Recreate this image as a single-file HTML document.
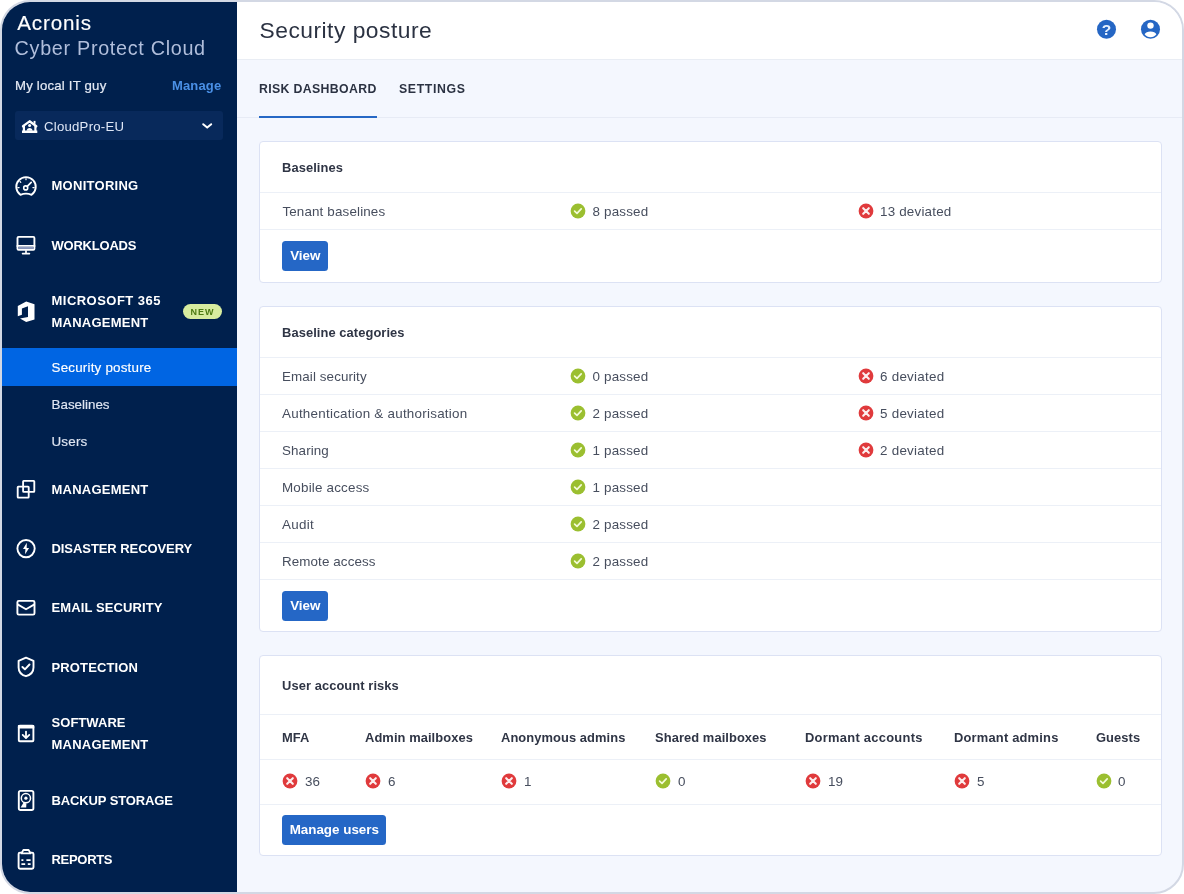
<!DOCTYPE html>
<html lang="en">
<head>
<meta charset="utf-8">
<title>Security posture</title>
<style>
*{box-sizing:border-box;margin:0;padding:0}
html,body{width:1184px;height:894px;background:#fff;overflow:hidden}
body{font-family:"Liberation Sans",Arial,sans-serif;color:#2b3242;font-size:13px;position:relative}
.frame{will-change:transform;position:absolute;left:0;top:0;width:1184px;height:894px;border:2px solid #d3d8e4;border-radius:30px;overflow:hidden;background:#f4f7fe}
.abs{position:absolute;white-space:nowrap}
/* sidebar */
.side{position:absolute;left:0;top:0;width:235px;height:890px;background:#00204d;color:#fff}
.logo1{left:15.2px;top:7.5px;font-size:20.6px;letter-spacing:.85px;color:#fff;line-height:26px;-webkit-text-stroke:.15px #fff}
.logo2{left:12.6px;top:33px;font-size:19.8px;color:#b0bedb;line-height:26px;letter-spacing:.69px}
.tenant{left:13px;top:76px;font-size:13.2px;letter-spacing:.2px;color:#e3e9f4;line-height:16px;-webkit-text-stroke:.2px #e3e9f4}
.manage{left:170px;top:76px;font-size:13px;font-weight:bold;letter-spacing:.15px;color:#4a90e6;line-height:16px}
.dd{position:absolute;left:12.5px;top:108.7px;width:208px;height:29.8px;background:#08295b;border-radius:3px}
.dd span{position:absolute;left:29.5px;top:7.9px;font-size:13.2px;letter-spacing:.23px;color:#dfe7f6;line-height:16px}
.mi{position:absolute;left:49.5px;margin-top:1px;font-size:13px;font-weight:bold;letter-spacing:.2px;color:#fff;line-height:22px;white-space:nowrap}
.sub{position:absolute;left:49.5px;margin-top:.7px;font-size:13.4px;letter-spacing:.2px;color:#dfe6f2;-webkit-text-stroke:.15px currentColor;line-height:16px;white-space:nowrap}
.active{position:absolute;left:0;top:346.4px;width:235px;height:37.2px;background:#0065e3}
.ico{position:absolute;left:14px;width:22px;height:22px}
.new{position:absolute;left:180.7px;top:302.1px;width:39.6px;height:15.2px;border-radius:8px;background:#d7ec9f;color:#4c7a12;font-size:9px;font-weight:bold;letter-spacing:1px;text-align:center;line-height:17.2px}
/* header */
.head{position:absolute;left:235px;top:0;width:945px;height:58px;background:#fff;border-bottom:1px solid #e9edf4}
.title{left:257.5px;top:13.6px;font-size:22.8px;color:#2b3242;line-height:28px;letter-spacing:.5px}
.tab{font-size:12.3px;font-weight:bold;letter-spacing:.35px;color:#2b3242;line-height:16px;top:79px}
.tabline{position:absolute;left:235px;top:115px;width:945px;height:1px;background:#e7ebf5}
.tabul{position:absolute;left:257px;top:113.5px;width:117.5px;height:2.8px;background:#2668c5}
/* cards */
.card{position:absolute;left:257px;width:903px;background:#fff;border:1px solid #dce2f4;border-radius:4px}
.card .h{position:absolute;left:22px;font-size:12.9px;font-weight:bold;letter-spacing:.08px;color:#2f3545;line-height:16px;white-space:nowrap}
.card .t{position:absolute;font-size:13.4px;letter-spacing:.1px;color:#474e5e;line-height:16px;white-space:nowrap}
.card .hr{position:absolute;left:0;width:901px;height:1px;background:#ecf0f7}
.btn{position:absolute;left:22.3px;height:30px;background:#2567c6;border-radius:3.5px;color:#fff;font-size:13.4px;font-weight:bold;line-height:30px;text-align:center}
.ok,.bad{position:absolute;width:16px;height:16px;margin-top:-.8px}
</style>
</head>
<body>
<svg width="0" height="0" style="position:absolute">
  <defs>
    <symbol id="ok" viewBox="0 0 16 16"><circle cx="8" cy="8" r="7.4" fill="#9bbf30"/><path d="M4.6 8.1 L7 10.3 L11.2 5.9" fill="none" stroke="#f4fbd9" stroke-width="1.7" stroke-linecap="round" stroke-linejoin="round"/></symbol>
    <symbol id="bad" viewBox="0 0 16 16"><circle cx="8" cy="8" r="7.4" fill="#e03a3c"/><path d="M5.2 5.2 L10.8 10.8 M10.8 5.2 L5.2 10.8" fill="none" stroke="#fdeeee" stroke-width="2.1" stroke-linecap="round"/></symbol>
  </defs>
</svg>
<div class="frame">
  <div class="side">
    <div class="abs logo1">Acronis</div>
    <div class="abs logo2">Cyber Protect Cloud</div>
    <div class="abs tenant">My local IT guy</div>
    <div class="abs manage">Manage</div>
    <div class="dd"><span>CloudPro-EU</span></div>
    <div class="active"></div>
    <div class="mi" style="top:172px;letter-spacing:0.27px">MONITORING</div>
    <div class="mi" style="top:232px;letter-spacing:-0.22px">WORKLOADS</div>
    <div class="mi" style="top:287.3px;letter-spacing:0.47px">MICROSOFT 365</div>
    <div class="mi" style="top:309.2px;letter-spacing:0.24px">MANAGEMENT</div>
    <div class="new">NEW</div>
    <div class="sub" style="top:357px;color:#fff">Security posture</div>
    <div class="sub" style="top:394px;letter-spacing:0">Baselines</div>
    <div class="sub" style="top:431px">Users</div>
    <div class="mi" style="top:476px;letter-spacing:0.24px">MANAGEMENT</div>
    <div class="mi" style="top:535px;letter-spacing:-0.07px">DISASTER RECOVERY</div>
    <div class="mi" style="top:594px;letter-spacing:0.11px">EMAIL SECURITY</div>
    <div class="mi" style="top:653.5px;letter-spacing:0.13px">PROTECTION</div>
    <div class="mi" style="top:709px;letter-spacing:0.05px">SOFTWARE</div>
    <div class="mi" style="top:731px;letter-spacing:0.24px">MANAGEMENT</div>
    <div class="mi" style="top:787px;letter-spacing:-0.12px">BACKUP STORAGE</div>
    <div class="mi" style="top:846px;letter-spacing:-0.3px">REPORTS</div>
    <!-- sidebar icons drawn in page coordinates -->
    <svg class="abs" style="left:0;top:0" width="235" height="890" viewBox="2 2 235 890" fill="none" stroke="#fff" stroke-width="1.9" stroke-linejoin="round" stroke-linecap="round">
      <!-- tenant house icon -->
      <path d="M23 126.2 L29.6 121.3 L36.3 126.2" stroke-width="2.3"/>
      <path d="M23.9 126 V131 M35.4 126 V131" stroke-width="2.2" stroke-linecap="butt"/>
      <path d="M22 131.8 H37.3" stroke-width="2.4" stroke-linecap="butt"/>
      <g stroke="none" fill="#fff">
        <rect x="33.6" y="120.9" width="1.9" height="3"/>
        <circle cx="29.6" cy="125.4" r="1.5"/>
        <path d="M26.6 130.8 C26.6 126.9 32.6 126.9 32.6 130.8 Z"/>
      </g>
      <!-- dropdown chevron -->
      <path d="M203.2 124.2 L207.2 127.6 L211.2 124.2" stroke-width="2"/>
      <!-- monitoring -->
      <path d="M20.4 194.8 A9.75 9.75 0 1 1 31.6 194.8 Q26 192.4 20.4 194.8 Z" stroke-width="1.85"/>
      <circle cx="25.7" cy="187.9" r="2" stroke-width="1.6"/>
      <path d="M27.2 186.4 L31.2 182.4" stroke-width="1.7"/>
      <path d="M26 178.5 V179.7 M17.8 187.6 H19.1 M32.9 187.6 H34.2 M20 181.5 L20.8 182.3" stroke-width="1.2"/>
      <!-- workloads -->
      <rect x="17.5" y="236.9" width="16.9" height="12.9" rx="1.1"/>
      <path d="M17.4 245.9 H34.5"/>
      <rect x="18.4" y="246.9" width="15.1" height="2" fill="#8f9cc0" stroke="none"/>
      <path d="M26 250.8 V253 M22.6 253.6 H29.4" stroke-width="1.7"/>
      <!-- microsoft 365 -->
      <path stroke="none" fill="#fff" d="M26.2 301.6 L34.5 304.2 L34.5 319.4 L26.2 322.1 L20 318.6 L28 317 L28 306.3 L21.9 308.5 L21.9 314.8 L17.8 316.2 L17.8 306 Z"/>
      <!-- management -->
      <rect x="23.1" y="480.8" width="11.2" height="11" rx=".6" stroke-width="1.85"/>
      <rect x="17.7" y="486.6" width="11" height="11" rx=".6" stroke-width="1.85"/>
      <!-- disaster recovery -->
      <circle cx="26.05" cy="548.6" r="8.65"/>
      <path stroke="none" fill="#fff" d="M26.8 542.8 L23 548.9 L25.4 548.9 L25.1 554.3 L29.1 547.9 L26.7 547.9 Z"/>
      <!-- email security -->
      <rect x="17.4" y="600.9" width="17.1" height="13.7" rx="1.4"/>
      <path d="M18 604.6 L26 609.3 L34 604.6" stroke-width="1.8"/>
      <!-- protection -->
      <path d="M26 657.7 L33.5 660.9 V667.4 C33.5 671.6 30.6 674.8 26 676.2 C21.4 674.8 18.6 671.6 18.6 667.4 V660.9 Z"/>
      <path d="M22.4 667 L24.9 669.3 L29.5 664.5" stroke-width="1.9"/>
      <!-- software management -->
      <rect x="18.8" y="725.8" width="14.6" height="15.5" rx="1"/>
      <rect x="17.9" y="724.9" width="16.4" height="3.7" rx=".9" fill="#fff" stroke="none"/>
      <path d="M26 731.6 V737.4 M22.7 734.9 L26 738.1 L29.3 734.9" stroke-width="1.8"/>
      <!-- backup storage -->
      <rect x="18.8" y="790.9" width="14.6" height="19.1" rx="1.8"/>
      <circle cx="25.9" cy="798.2" r="4.6" stroke-width="1.5"/>
      <circle cx="25.9" cy="798.2" r="1.6" fill="#fff" stroke="none"/>
      <path stroke="none" fill="#fff" d="M23.6 802.6 L26.4 803.4 L26.2 807.6 L20.6 807.6 Z"/>
      <!-- reports -->
      <path d="M21.6 852.6 H20 Q18.6 852.6 18.6 854 V867.3 Q18.6 868.7 20 868.7 H32 Q33.5 868.7 33.5 867.3 V854 Q33.5 852.6 32 852.6 H30.4"/>
      <path d="M21.4 853.4 L23.4 850 H28.6 L30.6 853.4 Z" stroke-width="1.8"/>
      <path d="M21.4 860.2 H23.4 M26.4 860.2 H30.6 M21.4 864.2 H25.2 M27.8 864.2 H30.6" stroke-width="1.7" stroke-linecap="butt"/>
    </svg>
  </div>
  <div class="head"></div>
  <div class="abs title">Security posture</div>
  <svg class="abs" style="left:1094px;top:17px" width="66" height="22" viewBox="1096 19 66 22">
    <circle cx="1106.5" cy="29.3" r="9.5" fill="#2566c4"/>
    <text x="1106.5" y="34.9" text-anchor="middle" font-family="Liberation Sans, Arial, sans-serif" font-weight="bold" font-size="15.5" fill="#eaf3ff">?</text>
    <circle cx="1150.5" cy="29.3" r="9.5" fill="#2566c4"/>
    <circle cx="1150.5" cy="25.6" r="3.2" fill="#fff"/>
    <path d="M1144.6 34.3 C1145.6 30.4 1155.4 30.4 1156.4 34.3 C1155 36.2 1152.9 37.3 1150.5 37.3 C1148.1 37.3 1146 36.2 1144.6 34.3 Z" fill="#fff"/>
  </svg>
  <div class="abs tab" style="left:257px">RISK DASHBOARD</div>
  <div class="abs tab" style="left:397px;letter-spacing:.62px">SETTINGS</div>
  <div class="tabline"></div>
  <div class="tabul"></div>

  <div class="card" style="top:139px;height:142px">
    <div class="h" style="top:18px">Baselines</div>
    <div class="hr" style="top:50.4px"></div>
    <div class="t" style="left:22.4px;top:62px;letter-spacing:.15px">Tenant baselines</div>
    <svg class="ok" style="left:310px;top:62px"><use href="#ok"/></svg><div class="t" style="left:332.4px;top:62px;letter-spacing:.21px">8 passed</div>
    <svg class="bad" style="left:598px;top:62px"><use href="#bad"/></svg><div class="t" style="left:620px;top:62px;letter-spacing:.2px">13 deviated</div>
    <div class="hr" style="top:87.4px"></div>
    <div class="btn" style="top:99px;width:46px">View</div>
  </div>

  <div class="card" style="top:304px;height:326.3px">
    <div class="h" style="top:18px">Baseline categories</div>
    <div class="hr" style="top:50.4px"></div>
    <div class="t" style="left:22px;top:62px">Email security</div>
    <svg class="ok" style="left:310px;top:62px"><use href="#ok"/></svg><div class="t" style="left:332.4px;top:62px;letter-spacing:.21px">0 passed</div>
    <svg class="bad" style="left:598px;top:62px"><use href="#bad"/></svg><div class="t" style="left:620px;top:62px;letter-spacing:.26px">6 deviated</div>
    <div class="hr" style="top:87.4px"></div>
    <div class="t" style="left:22px;top:99px;letter-spacing:.25px">Authentication &amp; authorisation</div>
    <svg class="ok" style="left:310px;top:99px"><use href="#ok"/></svg><div class="t" style="left:332.4px;top:99px;letter-spacing:.21px">2 passed</div>
    <svg class="bad" style="left:598px;top:99px"><use href="#bad"/></svg><div class="t" style="left:620px;top:99px;letter-spacing:.26px">5 deviated</div>
    <div class="hr" style="top:124.4px"></div>
    <div class="t" style="left:22px;top:136px">Sharing</div>
    <svg class="ok" style="left:310px;top:136px"><use href="#ok"/></svg><div class="t" style="left:332.4px;top:136px;letter-spacing:.21px">1 passed</div>
    <svg class="bad" style="left:598px;top:136px"><use href="#bad"/></svg><div class="t" style="left:620px;top:136px;letter-spacing:.26px">2 deviated</div>
    <div class="hr" style="top:161.4px"></div>
    <div class="t" style="left:22px;top:173px;letter-spacing:.2px">Mobile access</div>
    <svg class="ok" style="left:310px;top:173px"><use href="#ok"/></svg><div class="t" style="left:332.4px;top:173px;letter-spacing:.21px">1 passed</div>
    <div class="hr" style="top:198.4px"></div>
    <div class="t" style="left:22px;top:210px;letter-spacing:.3px">Audit</div>
    <svg class="ok" style="left:310px;top:210px"><use href="#ok"/></svg><div class="t" style="left:332.4px;top:210px;letter-spacing:.21px">2 passed</div>
    <div class="hr" style="top:235.4px"></div>
    <div class="t" style="left:22px;top:247px">Remote access</div>
    <svg class="ok" style="left:310px;top:247px"><use href="#ok"/></svg><div class="t" style="left:332.4px;top:247px;letter-spacing:.21px">2 passed</div>
    <div class="hr" style="top:272.4px"></div>
    <div class="btn" style="top:284px;width:46px">View</div>
  </div>

  <div class="card" style="top:653px;height:201.3px">
    <div class="h" style="top:22px">User account risks</div>
    <div class="hr" style="top:58.4px"></div>
    <div class="h" style="left:22px;top:74px">MFA</div>
    <div class="h" style="left:105px;top:74px">Admin mailboxes</div>
    <div class="h" style="left:241px;top:74px">Anonymous admins</div>
    <div class="h" style="left:395px;top:74px">Shared mailboxes</div>
    <div class="h" style="left:545px;top:74px;letter-spacing:.28px">Dormant accounts</div>
    <div class="h" style="left:694px;top:74px;letter-spacing:.2px">Dormant admins</div>
    <div class="h" style="left:836px;top:74px">Guests</div>
    <div class="hr" style="top:103.4px"></div>
    <svg class="bad" style="left:22px;top:118px"><use href="#bad"/></svg><div class="t" style="left:45px;top:118px">36</div>
    <svg class="bad" style="left:105px;top:118px"><use href="#bad"/></svg><div class="t" style="left:128px;top:118px">6</div>
    <svg class="bad" style="left:241px;top:118px"><use href="#bad"/></svg><div class="t" style="left:264px;top:118px">1</div>
    <svg class="ok" style="left:395px;top:118px"><use href="#ok"/></svg><div class="t" style="left:418px;top:118px">0</div>
    <svg class="bad" style="left:545px;top:118px"><use href="#bad"/></svg><div class="t" style="left:568px;top:118px">19</div>
    <svg class="bad" style="left:694px;top:118px"><use href="#bad"/></svg><div class="t" style="left:717px;top:118px">5</div>
    <svg class="ok" style="left:836px;top:118px"><use href="#ok"/></svg><div class="t" style="left:858px;top:118px">0</div>
    <div class="hr" style="top:148.4px"></div>
    <div class="btn" style="top:159px;width:104px">Manage users</div>
  </div>
</div>
</body>
</html>
